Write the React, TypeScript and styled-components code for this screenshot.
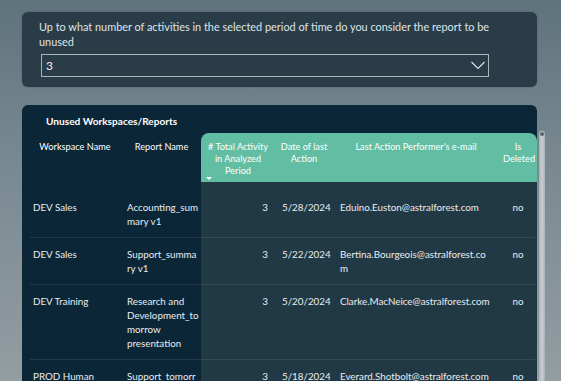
import React from "react";
import styled, { createGlobalStyle } from "styled-components";

type Align = "left" | "right" | "center";

interface ReportRow {
  workspace: string;
  report: string;
  activity: number;
  lastDate: string;
  performer: string;
  deleted: string;
}

const rows: ReportRow[] = [
  {
    workspace: "DEV Sales",
    report: "Accounting_summary v1",
    activity: 3,
    lastDate: "5/28/2024",
    performer: "Eduino.Euston@astralforest.com",
    deleted: "no",
  },
  {
    workspace: "DEV Sales",
    report: "Support_summary v1",
    activity: 3,
    lastDate: "5/22/2024",
    performer: "Bertina.Bourgeois@astralforest.com",
    deleted: "no",
  },
  {
    workspace: "DEV Training",
    report: "Research and Development_tomorrow presentation",
    activity: 3,
    lastDate: "5/20/2024",
    performer: "Clarke.MacNeice@astralforest.com",
    deleted: "no",
  },
  {
    workspace: "PROD Human Resources",
    report: "Support_tomorrow presentation",
    activity: 3,
    lastDate: "5/18/2024",
    performer: "Everard.Shotbolt@astralforest.com",
    deleted: "no",
  },
];

const GlobalStyle = createGlobalStyle`
  html, body {
    margin: 0;
    height: 381px;
    overflow: hidden;
  }
  body {
    background: linear-gradient(180deg, #5f737d 0%, #7a8a92 45%, #939da2 100%);
    font-family: Lato, "Liberation Sans", sans-serif;
    -webkit-font-smoothing: antialiased;
  }
`;

const Page = styled.div`
  padding: 12px 0 0 22px;
`;

const FilterCard = styled.div`
  width: 515px;
  box-sizing: border-box;
  padding: 7px 17px 10px 17px;
  background: #293c48;
  border-radius: 6px;
  box-shadow: 0 0 2px rgba(0, 0, 0, 0.25);
`;

const Prompt = styled.div`
  font-size: 10.9px;
  line-height: 15px;
  color: #dfe4e7;
`;

const Select = styled.div`
  margin: 5px 0 0 2px;
  width: 448px;
  height: 23px;
  box-sizing: border-box;
  border: 1px solid #aab4b9;
  display: flex;
  align-items: center;
  justify-content: space-between;
  padding: 0 2px 0 4px;
  font-size: 12px;
  color: #eef1f2;
`;

const Chevron = styled.svg`
  display: block;
`;

const VisualRow = styled.div`
  display: flex;
  align-items: flex-start;
  margin-top: 18px;
`;

const TableCard = styled.div`
  width: 515px;
  height: 300px;
  box-sizing: border-box;
  padding: 9px 0 0 6px;
  background: #0b2637;
  border-radius: 6px;
  overflow: hidden;
`;

const Title = styled.div`
  padding-left: 18px;
  margin-bottom: 4px;
  font-size: 10.1px;
  font-weight: 700;
  line-height: 15px;
  color: #ffffff;
`;

const Grid = styled.div`
  display: grid;
  grid-template-columns: 94px 79px 74px 58px 166px 38px;
`;

const HeaderRow = styled(Grid)`
  height: 49px;
`;

const HeaderCell = styled.div<{ $accent?: boolean; $corner?: "left" | "right" }>`
  display: flex;
  flex-direction: column;
  padding: 8px 4px 0;
  text-align: center;
  font-size: 9.2px;
  line-height: 12px;
  color: #ffffff;
  background: ${(p) => (p.$accent ? "#62bea2" : "transparent")};
  border-top-left-radius: ${(p) => (p.$corner === "left" ? "8px" : "0")};
  border-top-right-radius: ${(p) => (p.$corner === "right" ? "8px" : "0")};
`;

const SortMark = styled.span`
  margin-top: auto;
  margin-bottom: 3px;
  margin-left: 1px;
  width: 0;
  height: 0;
  border-left: 3px solid transparent;
  border-right: 3px solid transparent;
  border-top: 3px solid #ffffff;
`;

const Cell = styled.div<{ $align?: Align; $tint?: boolean; $padL?: number; $padR?: number }>`
  padding: 9px ${(p) => p.$padR ?? 4}px 10px ${(p) => p.$padL ?? 5}px;
  text-align: ${(p) => p.$align ?? "left"};
  font-size: 9.8px;
  line-height: 14px;
  color: #e9edef;
  overflow-wrap: anywhere;
  background: ${(p) => (p.$tint ? "#213845" : "transparent")};
`;

const Row = styled(Grid)<{ $first?: boolean }>`
  position: relative;

  ${Cell} {
    padding-top: ${(p) => (p.$first ? "18px" : "9px")};
  }

  &::after {
    content: "";
    position: absolute;
    left: 2px;
    right: 2px;
    bottom: 0;
    height: 1px;
    background: rgba(255, 255, 255, 0.09);
  }
`;

const ScrollTrack = styled.div`
  position: relative;
  margin: 26px 0 0 2px;
  width: 6px;
  height: 260px;
  border-radius: 3px;
  background: linear-gradient(90deg, #aab2b6, #c9cfd2 50%, #aab2b6);
`;

const ScrollKnob = styled.span`
  position: absolute;
  top: 1px;
  left: 1px;
  width: 4px;
  height: 4px;
  border-radius: 50%;
  background: #5a646a;
`;

export default function App() {
  return (
    <>
      <GlobalStyle />
      <Page>
        <FilterCard>
          <Prompt>
            Up to what number of activities in the selected period of time do you consider the report to be unused
          </Prompt>
          <Select>
            <span>3</span>
            <Chevron width="16" height="9" viewBox="0 0 16 9">
              <polyline points="1.5,1 8,7.5 14.5,1" fill="none" stroke="#d7e0e6" strokeWidth="1.2" />
            </Chevron>
          </Select>
        </FilterCard>

        <VisualRow>
          <TableCard>
            <Title>Unused Workspaces/Reports</Title>
            <HeaderRow>
              <HeaderCell>Workspace Name</HeaderCell>
              <HeaderCell>Report Name</HeaderCell>
              <HeaderCell $accent $corner="left">
                # Total Activity in Analyzed Period
                <SortMark />
              </HeaderCell>
              <HeaderCell $accent>Date of last Action</HeaderCell>
              <HeaderCell $accent>Last Action Performer's e-mail</HeaderCell>
              <HeaderCell $accent $corner="right">Is Deleted</HeaderCell>
            </HeaderRow>
            {rows.map((r, i) => (
              <Row key={i} $first={i === 0}>
                <Cell>{r.workspace}</Cell>
                <Cell $padR={1}>{r.report}</Cell>
                <Cell $tint $align="right" $padR={7}>
                  {r.activity}
                </Cell>
                <Cell $tint $padL={7} $padR={0}>
                  {r.lastDate}
                </Cell>
                <Cell $tint $padL={7} $padR={6}>
                  {r.performer}
                </Cell>
                <Cell $tint $align="center" $padL={2} $padR={2}>
                  {r.deleted}
                </Cell>
              </Row>
            ))}
          </TableCard>
          <ScrollTrack>
            <ScrollKnob />
          </ScrollTrack>
        </VisualRow>
      </Page>
    </>
  );
}
